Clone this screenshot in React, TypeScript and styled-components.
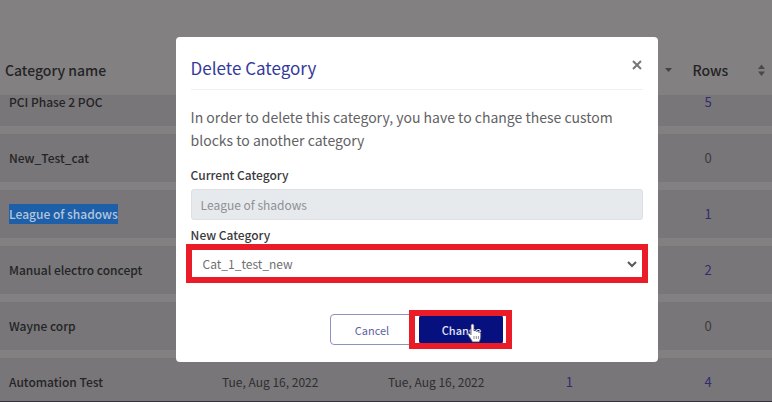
import React, { useLayoutEffect, useRef } from "react";
import styled, { createGlobalStyle } from "styled-components";

const GlobalStyle = createGlobalStyle`
  * { box-sizing: border-box; }
  body {
    margin: 0;
    background: #828081;
    font-family: "Noto Sans CJK SC", "Noto Sans", sans-serif;
    font-size: 13px;
  }
`;

const Page = styled.main`
  height: 100vh;
  display: flex;
  flex-direction: column;
  border-bottom: 1px solid #35323c;
`;

const Scroller = styled.div`
  flex: 1;
  min-height: 0;
  overflow-y: auto;
  scrollbar-width: none;
`;

const Table = styled.table`
  width: 100%;
  table-layout: fixed;
  border-collapse: separate;
  border-spacing: 0;
  color: #2e2e30;
`;

const HeadCell = styled.th<{ $align?: string }>`
  position: sticky;
  top: 0;
  height: 95px;
  padding: 44px 5px 0;
  background: #828081;
  font-size: 14px;
  font-weight: 500;
  text-align: ${(p) => p.$align ?? "center"};
  color: #242426;
`;

const HeadContent = styled.div<{ $spread?: boolean }>`
  display: flex;
  align-items: center;
  justify-content: ${(p) => (p.$spread ? "space-between" : "flex-start")};
`;

const Cell = styled.td<{ $align?: string }>`
  height: 56px;
  padding: 0 9px;
  background: #787678;
  border-bottom: 8px solid #828081;
  text-align: ${(p) => p.$align ?? "center"};
  font-size: 12px;
  line-height: 20px;
`;

const RowsCell = styled(Cell)`
  padding-left: 32px;
`;

const Name = styled.span<{ $selected?: boolean }>`
  display: inline-block;
  font-weight: 500;
  color: ${(p) => (p.$selected ? "#b4c6dc" : "#242426")};
  background: ${(p) => (p.$selected ? "#1d5fa9" : "transparent")};
`;

const Count = styled.a`
  font-size: 13px;
  color: #2f2c70;
  text-decoration: none;
`;

const Zero = styled.span`
  font-size: 13px;
  color: #3e3c40;
`;

const Backdrop = styled.div`
  position: fixed;
  inset: 0;
  display: flex;
  justify-content: center;
  align-items: flex-start;
  padding: 37px 0 0 62px;
`;

const Dialog = styled.section`
  width: 68%;
  min-width: 440px;
  padding: 15px;
  border-radius: 4px;
  background: #fff;
`;

const DialogHeader = styled.header`
  display: flex;
  align-items: center;
  justify-content: space-between;
  height: 38px;
  padding-bottom: 6px;
  border-bottom: 1px solid #efeff1;
`;

const Title = styled.h2`
  margin: 0;
  font-size: 17px;
  font-weight: 400;
  line-height: 24px;
  color: #343a9c;
`;

const CloseButton = styled.button`
  display: flex;
  padding: 0 0 5px;
  border: 0;
  background: none;
  color: #77777a;
`;

const Message = styled.p`
  margin: 16px 0 15px;
  font-size: 14px;
  line-height: 23px;
  color: #626265;
`;

const Label = styled.label`
  display: block;
  height: 22px;
  font-size: 12px;
  font-weight: 500;
  line-height: 16px;
  color: #3a3a3d;
`;

const controlText = `
  width: 100%;
  font-family: inherit;
  font-size: 12px;
`;

const TextInput = styled.input`
  ${controlText}
  display: block;
  height: 31px;
  margin-bottom: 7px;
  padding: 0 9px;
  border: 1px solid #dcdfe3;
  border-radius: 3px;
  background: #e7eaed;
  color: #8d9094;
`;

const SelectFrame = styled.div`
  position: relative;
  display: flex;
  align-items: center;
  svg {
    position: absolute;
    right: 6px;
    pointer-events: none;
  }
`;

const Select = styled.select`
  ${controlText}
  height: 29px;
  padding: 0 11px;
  border: 1px solid #a9a5d6;
  appearance: none;
  background: #fff;
  color: #6f6f72;
`;

const Highlight = styled.span`
  position: absolute;
  inset: -5px;
  border: 6px solid #e91c28;
  pointer-events: none;
`;

const Actions = styled.footer`
  display: flex;
  justify-content: center;
  gap: 6px;
  padding: 36px 0 2px;
`;

const Button = styled.button<{ $primary?: boolean }>`
  width: ${(p) => (p.$primary ? "84px" : "83px")};
  height: 31px;
  padding: 0;
  border: 1px solid ${(p) => (p.$primary ? "#06117f" : "#8d91bd")};
  border-radius: 4px;
  background: ${(p) => (p.$primary ? "#06117f" : "#fff")};
  color: ${(p) => (p.$primary ? "#e3e4f4" : "#5f5fa5")};
  font-family: inherit;
  font-size: 11px;
  font-weight: ${(p) => (p.$primary ? 500 : 400)};
`;

const ButtonFrame = styled.div`
  position: relative;
  display: flex;
`;

const ButtonHighlight = styled(Highlight)`
  inset: -4px -9px -4px -10px;
`;

const Pointer = styled.svg`
  position: absolute;
  left: 48px;
  top: 9px;
  pointer-events: none;
`;

type Row = { name: string; rows: number; selected?: boolean; created?: string; updated?: string; blocks?: number };

const rows: Row[] = [
  { name: "PCI Phase 2 POC", rows: 5 },
  { name: "New_Test_cat", rows: 0 },
  { name: "League of shadows", rows: 1, selected: true },
  { name: "Manual electro concept", rows: 2 },
  { name: "Wayne corp", rows: 0 },
  { name: "Automation Test", rows: 4, created: "Tue, Aug 16, 2022", updated: "Tue, Aug 16, 2022", blocks: 1 },
];

const SCROLL_TOP = 17;

export default function App() {
  const scroller = useRef<HTMLDivElement>(null);
  useLayoutEffect(() => {
    if (scroller.current) scroller.current.scrollTop = SCROLL_TOP;
  }, []);

  return (
    <>
      <GlobalStyle />
      <Page>
        <Scroller ref={scroller}>
          <Table>
            <colgroup>
              <col width="24%" />
              <col width="22%" />
              <col width="21%" />
              <col width="13.5%" />
              <col width="19.5%" />
            </colgroup>
            <thead>
              <tr>
                <HeadCell $align="left">Category name</HeadCell>
                <HeadCell />
                <HeadCell />
                <HeadCell />
                <HeadCell>
                  <HeadContent $spread>
                    <HeadContent>
                      <svg width="66" height="8" aria-hidden="true">
                        <path d="M39 2h7l-3.500 4z" fill="#444244" />
                      </svg>
                      Rows
                    </HeadContent>
                    <svg width="12" height="14" viewBox="0 0 12 14" aria-hidden="true">
                      <path d="M3 6h7L6.500 1.500zM3 8.500h7L6.500 13z" fill="#4a484a" />
                    </svg>
                  </HeadContent>
                </HeadCell>
              </tr>
            </thead>
            <tbody>
              {rows.map((row) => (
                <tr key={row.name}>
                  <Cell $align="left">
                    <Name $selected={row.selected}>{row.name}</Name>
                  </Cell>
                  <Cell>{row.created}</Cell>
                  <Cell>{row.updated}</Cell>
                  <Cell>{row.blocks && <Count href="#blocks">{row.blocks}</Count>}</Cell>
                  <RowsCell>{row.rows ? <Count href="#rows">{row.rows}</Count> : <Zero>0</Zero>}</RowsCell>
                </tr>
              ))}
            </tbody>
          </Table>
        </Scroller>
      </Page>
      <Backdrop>
        <Dialog role="dialog" aria-modal="true" aria-labelledby="dialog-title">
          <DialogHeader>
            <Title id="dialog-title">Delete Category</Title>
            <CloseButton type="button" aria-label="Close">
              <svg width="12" height="12" viewBox="0 0 12 12" fill="none" stroke="currentColor" strokeWidth="2">
                <path d="M2 2l8 8M10 2l-8 8" />
              </svg>
            </CloseButton>
          </DialogHeader>
          <Message>
            In order to delete this category, you have to change these custom blocks to another category
          </Message>
          <Label htmlFor="current">Current Category</Label>
          <TextInput id="current" defaultValue="League of shadows" disabled />
          <Label htmlFor="next">New Category</Label>
          <SelectFrame>
            <Select id="next" defaultValue="Cat_1_test_new">
              <option>Cat_1_test_new</option>
            </Select>
            <svg width="10" height="8" viewBox="0 0 10 8" fill="none" stroke="#58585b" strokeWidth="2">
              <path d="M1 2l4 4 4-4" />
            </svg>
            <Highlight />
          </SelectFrame>
          <Actions>
            <Button type="button">Cancel</Button>
            <ButtonFrame>
              <Button type="button" $primary>Change</Button>
              <ButtonHighlight />
              <Pointer width="15" height="20" viewBox="0 0 15 20" aria-hidden="true">
                <path
                  d="M4 2.500C4 .5 7 .5 7 2.500V8c.6-.8 2.200-.6 2.400.5.800-.7 2-.3 2.200.7 1-.4 2.200.2 2.200 1.500V14c0 2-1 2.700-1.300 5H5.200C5 17 2.500 14.500 1 12c-1-1.600.8-2.700 2-1.300l1 1z"
                  fill="#fff"
                  stroke="#42455f"
                  strokeWidth=".8"
                />
                <path d="M7 13v3M9.300 13v3M11.400 13v3" stroke="#42455f" strokeWidth=".6" />
              </Pointer>
            </ButtonFrame>
          </Actions>
        </Dialog>
      </Backdrop>
    </>
  );
}
